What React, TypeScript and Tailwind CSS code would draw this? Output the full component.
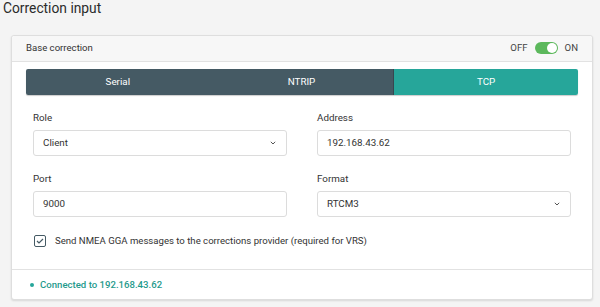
import React from "react";

function Chevron() {
  return (
    <svg width="6" height="4" viewBox="0 0 6 4" fill="none">
      <path d="M0.8 0.8l2.2 2.2 2.2-2.2" stroke="#555" strokeWidth="1" />
    </svg>
  );
}

function Field({ label, value, select }: { label: string; value: string; select?: boolean }) {
  return (
    <div className="flex flex-col">
      <div className="h-[14px] text-[9.8px] leading-[14px] text-[#333]">{label}</div>
      <div className="mt-[5px] h-[26px] rounded-[3px] border border-[#dcdcdc] bg-white flex items-center justify-between pl-[9px] pr-[10px] text-[9.8px] text-[#333]">
        <span>{value}</span>
        {select && <Chevron />}
      </div>
    </div>
  );
}

export default function App() {
  return (
    <div
      className="w-[600px] h-[307px] bg-[#f4f4f4] overflow-hidden"
      style={{ fontFamily: "Roboto, 'Liberation Sans', sans-serif" }}
    >
      <div className="pl-[3px] pt-[1px] h-[35px] text-[13.8px] leading-[14px] text-[#2b2b2b]">Correction input</div>
      <div className="ml-[11px] w-[582px] rounded-[3px] border border-[#dedede] bg-white shadow-[0_1px_2px_rgba(0,0,0,0.12)]">
        <div className="h-[26px] bg-[#f7f7f7] border-b border-[#e2e2e2] flex items-center justify-between pl-[14px] pr-[14px] rounded-t-[3px]">
          <span className="text-[9.6px] text-[#333]">Base correction</span>
          <div className="flex items-center gap-[7px] text-[9.6px] text-[#444]">
            <span>OFF</span>
            <div className="w-[23px] h-[12px] rounded-full bg-[#5cb85c] relative">
              <div className="absolute right-[1px] top-[1px] w-[10px] h-[10px] rounded-full bg-white" />
            </div>
            <span>ON</span>
          </div>
        </div>
        <div className="px-[14px] pt-[7px]">
          <div className="h-[26px] flex rounded-[2px] overflow-hidden text-[9.8px] text-white shadow-[0_1px_1px_rgba(0,0,0,0.2)]">
            <div className="flex-1 bg-[#455a64] flex items-center justify-center">Serial</div>
            <div className="flex-1 bg-[#455a64] flex items-center justify-center border-r border-[#37474f]">NTRIP</div>
            <div className="flex-1 bg-[#26a69a] flex items-center justify-center">TCP</div>
          </div>
          <div className="px-[7px] pt-[16px] grid grid-cols-2 gap-x-[30px] gap-y-[16px]">
            <Field label="Role" value="Client" select />
            <Field label="Address" value="192.168.43.62" />
            <Field label="Port" value="9000" />
            <Field label="Format" value="RTCM3" select />
          </div>
          <div className="pl-[8px] pt-[17px] pb-[21px] flex items-center gap-[9px]">
            <div className="w-[12px] h-[12px] border border-[#455a64] rounded-[2px] flex items-center justify-center">
              <svg width="8" height="6" viewBox="0 0 8 6" fill="none">
                <path d="M1 3l2 2 4-4" stroke="#455a64" strokeWidth="1.2" />
              </svg>
            </div>
            <span className="text-[9.6px] text-[#333]">Send NMEA GGA messages to the corrections provider (required for VRS)</span>
          </div>
        </div>
        <div className="border-t border-[#e2e2e2] h-[30px] flex items-center pl-[18px] gap-[6px] text-[9.6px] text-[#1f9a8c] font-medium">
          <span className="w-[4px] h-[4px] rounded-full bg-[#26a69a]" />
          <span>Connected to 192.168.43.62</span>
        </div>
      </div>
    </div>
  );
}
